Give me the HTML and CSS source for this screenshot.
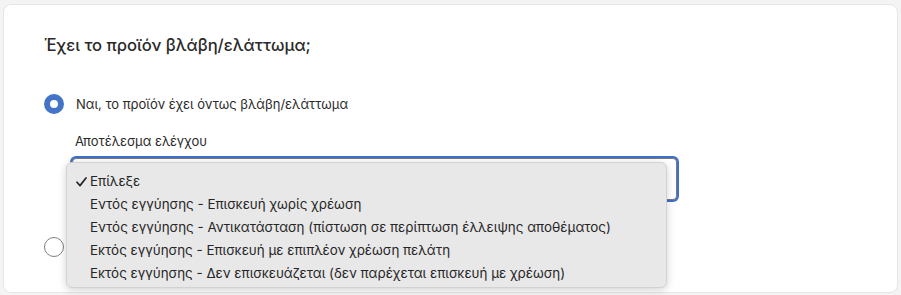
FILE: index.html
```html
<!DOCTYPE html>
<html lang="el">
<head>
<meta charset="utf-8">
<link rel="stylesheet" href="styles.css">
</head>
<body>
<div class="card">
  <h2 class="title">Έχει το προϊόν βλάβη/ελάττωμα;</h2>
  <div class="radio-row first">
    <span class="radio checked"></span>
    <span class="radio-label">Ναι, το προϊόν έχει όντως βλάβη/ελάττωμα</span>
  </div>
  <div class="field">
    <div class="field-label">Αποτέλεσμα ελέγχου</div>
    <div class="select"></div>
  </div>
  <div class="radio-row second">
    <span class="radio"></span>
  </div>
</div>
<ul class="dropdown">
  <li class="opt selected"><svg class="check" width="11" height="10" viewBox="0 0 11 10"><path d="M1 5.2 L4 8.6 L10 1" fill="none" stroke="#262626" stroke-width="1.7" stroke-linecap="round" stroke-linejoin="round"/></svg>Επίλεξε</li>
  <li class="opt">Εντός εγγύησης - Επισκευή χωρίς χρέωση</li>
  <li class="opt">Εντός εγγύησης - Αντικατάσταση (πίστωση σε περίπτωση έλλειψης αποθέματος)</li>
  <li class="opt">Εκτός εγγύησης - Επισκευή με επιπλέον χρέωση πελάτη</li>
  <li class="opt">Εκτός εγγύησης - Δεν επισκευάζεται (δεν παρέχεται επισκευή με χρέωση)</li>
</ul>
</body>
</html>
```
FILE: styles.css
```css
html, body {
  margin: 0;
  padding: 0;
}
body {
  background: #f4f4f4;
  font-family: Inter, "Noto Sans", sans-serif;
  color: #222;
  height: 295px;
  overflow: hidden;
  position: relative;
}
.card {
  margin: 4px 3px 0 3px;
  background: #fff;
  border: 1px solid #e6e6e6;
  border-radius: 8px;
  padding: 28px 40px 0 40px;
  box-sizing: border-box;
  height: 289px;
}
.title {
  margin: 0;
  font-size: 16.6px;
  line-height: 24px;
  font-weight: 500;
  color: #2a2a2a;
}
.radio-row {
  display: flex;
  align-items: center;
  gap: 12px;
  height: 20px;
}
.radio-row.first {
  margin-top: 37px;
}
.radio-row.second {
  margin-top: 37px;
}
.radio {
  width: 20px;
  height: 20px;
  box-sizing: border-box;
  border-radius: 50%;
  border: 1px solid #808080;
  background: #fff;
  flex: none;
}
.radio.checked {
  border: 6px solid #4474c8;
}
.radio-label {
  font-size: 13px;
  line-height: 20px;
  color: #2a2a2a;
}
.field {
  margin-left: 31px;
  margin-top: 17px;
}
.field-label {
  font-size: 13px;
  line-height: 20px;
  color: #2a2a2a;
}
.select {
  margin-top: 7px;
  margin-left: -3px;
  width: 605px;
  height: 42px;
  box-sizing: border-box;
  border: 1px solid #7a7a7a;
  border-radius: 4px;
  box-shadow: 0 0 0 2px #3f6fcc;
  background: #fff;
}
.dropdown {
  position: absolute;
  left: 66px;
  top: 162px;
  width: 601px;
  height: 126px;
  box-sizing: border-box;
  margin: 0;
  padding: 7px 0 4px 0;
  list-style: none;
  background: #e8e8e8;
  border: 1px solid #d2d2d2;
  border-radius: 6px;
  box-shadow: 0 2px 8px rgba(0, 0, 0, 0.18);
}
.opt {
  height: 23px;
  line-height: 23px;
  font-size: 13.4px;
  padding-left: 23px;
  color: #262626;
  white-space: nowrap;
}
.check {
  margin-left: -14px;
  margin-right: 3px;
  vertical-align: -1px;
}
```
